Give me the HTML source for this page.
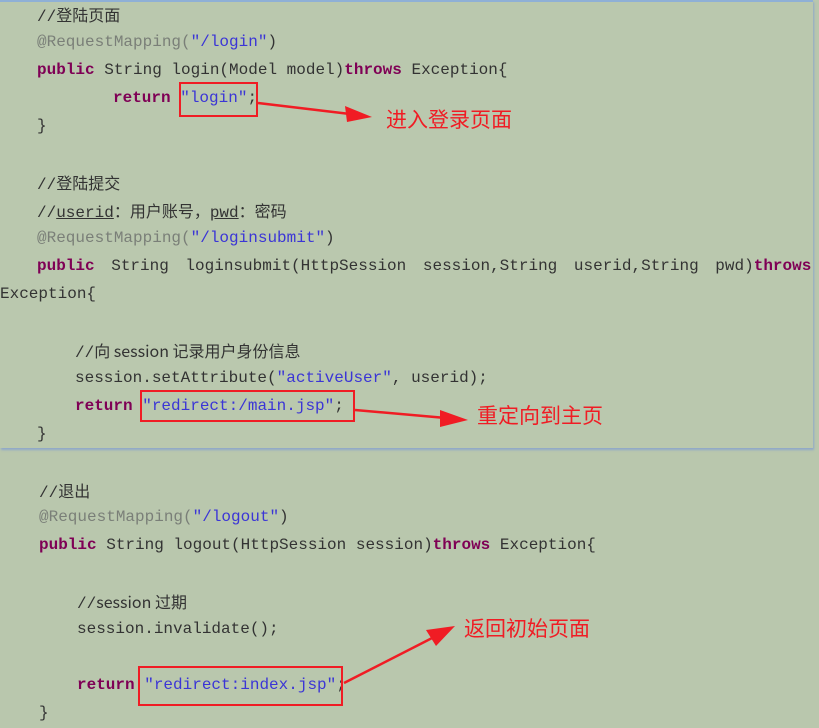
<!DOCTYPE html>
<html><head><meta charset="utf-8"><style>
*{margin:0;padding:0}
body{width:819px;height:728px;background:#b9c7ad;position:relative;overflow:hidden;font-family:"Liberation Mono","Noto Sans CJK SC",monospace;font-size:16px;color:#333}
.l{position:absolute;white-space:pre;line-height:20px}
.k{color:#7f0055;font-weight:bold}
.s{color:#3b35d6}
.a{color:#7a7f78}
.c{font-family:"Noto Sans CJK SC",sans-serif;font-size:16px}
.u{text-decoration:underline}
.lab{position:absolute;color:#f01c24;font-family:"Noto Sans CJK SC",sans-serif;font-size:21px;line-height:24px;white-space:nowrap}
.box{position:absolute;border:2px solid #f01c24}
#p1{position:absolute;left:0;top:0;width:813px;height:446px;background:#bac8ae;border-top:2px solid #8fb0d6;box-shadow:1px 2px 2px #8fa8c8}
</style></head><body>
<div id="p1"></div>
<div class="l" style="left:37px;top:4px">//<span class="c">登陆页面</span></div>
<div class="l a" style="left:37px;top:32px">@RequestMapping(<span class="s">"/login"</span><span style="color:#333">)</span></div>
<div class="l" style="left:37px;top:60px"><span class="k">public</span> String login(Model model)<span class="k">throws</span> Exception{</div>
<div class="l" style="left:113px;top:88px"><span class="k">return</span> <span class="s">"login"</span>;</div>
<div class="l" style="left:37px;top:116px">}</div>
<div class="l" style="left:37px;top:172px">//<span class="c">登陆提交</span></div>
<div class="l" style="left:37px;top:200px">//<span class="u">userid</span><span class="c">：用户账号，</span><span class="u">pwd</span><span class="c">：密码</span></div>
<div class="l a" style="left:37px;top:228px">@RequestMapping(<span class="s">"/loginsubmit"</span><span style="color:#333">)</span></div>
<div class="l" style="left:37px;top:256px;word-spacing:7px"><span class="k">public</span> String loginsubmit(HttpSession session,String userid,String pwd)<span class="k">throws</span></div>
<div class="l" style="left:0;top:284px">Exception{</div>
<div class="l" style="left:75px;top:340px">//<span class="c">向 session 记录用户身份信息</span></div>
<div class="l" style="left:75px;top:368px">session.setAttribute(<span class="s">"activeUser"</span>, userid);</div>
<div class="l" style="left:75px;top:396px"><span class="k">return</span> <span class="s">"redirect:/main.jsp"</span>;</div>
<div class="l" style="left:37px;top:424px">}</div>
<div class="l" style="left:39px;top:480px">//<span class="c">退出</span></div>
<div class="l a" style="left:39px;top:507px">@RequestMapping(<span class="s">"/logout"</span><span style="color:#333">)</span></div>
<div class="l" style="left:39px;top:535px"><span class="k">public</span> String logout(HttpSession session)<span class="k">throws</span> Exception{</div>
<div class="l" style="left:77px;top:591px">//<span class="c">session 过期</span></div>
<div class="l" style="left:77px;top:619px">session.invalidate();</div>
<div class="l" style="left:77px;top:675px"><span class="k">return</span> <span class="s">"redirect:index.jsp"</span>;</div>
<div class="l" style="left:39px;top:703px">}</div>
<div class="box" style="left:179px;top:82px;width:75px;height:31px"></div>
<div class="box" style="left:140px;top:390px;width:211px;height:28px"></div>
<div class="box" style="left:138px;top:666px;width:201px;height:36px"></div>
<svg style="position:absolute;left:0;top:0" width="819" height="728">
<g fill="#f01c24" stroke="#f01c24" stroke-width="2.5">
<line x1="258" y1="103" x2="350" y2="114"/><polygon points="372,117 345,106 347,122" stroke="none"/>
<line x1="355" y1="410" x2="446" y2="418"/><polygon points="468,420 440,410 440,427" stroke="none"/>
<line x1="344" y1="683" x2="438" y2="635"/><polygon points="455,626 426,630 436,646" stroke="none"/>
</g></svg>
<div class="lab" style="left:386px;top:107px">进入登录页面</div>
<div class="lab" style="left:477px;top:403px">重定向到主页</div>
<div class="lab" style="left:464px;top:616px">返回初始页面</div>
</body></html>
